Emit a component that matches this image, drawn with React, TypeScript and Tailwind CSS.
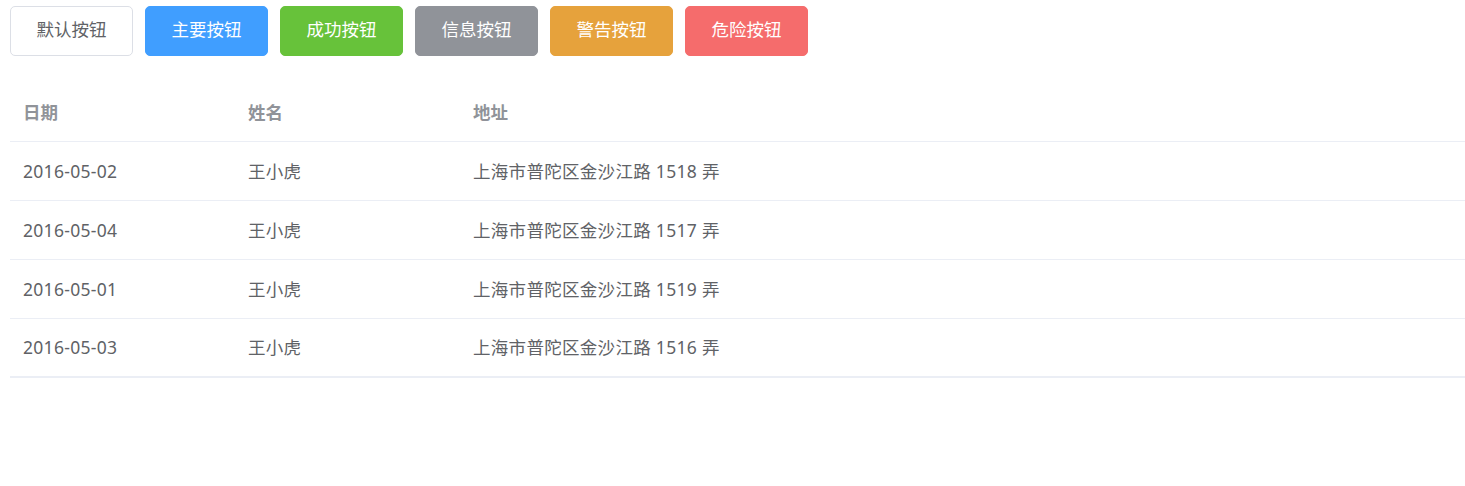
const buttons = [
  { label: '默认按钮', cls: 'bg-white border-[#dcdfe6] text-[#606266]' },
  { label: '主要按钮', cls: 'bg-[#409eff] border-[#409eff] text-white' },
  { label: '成功按钮', cls: 'bg-[#67c23a] border-[#67c23a] text-white' },
  { label: '信息按钮', cls: 'bg-[#909399] border-[#909399] text-white' },
  { label: '警告按钮', cls: 'bg-[#e6a23c] border-[#e6a23c] text-white' },
  { label: '危险按钮', cls: 'bg-[#f56c6c] border-[#f56c6c] text-white' },
];

const rows = [
  { date: '2016-05-02', name: '王小虎', address: '上海市普陀区金沙江路 1518 弄' },
  { date: '2016-05-04', name: '王小虎', address: '上海市普陀区金沙江路 1517 弄' },
  { date: '2016-05-01', name: '王小虎', address: '上海市普陀区金沙江路 1519 弄' },
  { date: '2016-05-03', name: '王小虎', address: '上海市普陀区金沙江路 1516 弄' },
];

export default function App() {
  return (
    <div className="min-h-[486px] bg-white pt-[6px] pl-[10px] font-['Noto_Sans','Noto_Sans_CJK_SC',sans-serif] text-[17.5px]">
      <div className="flex gap-[12px]">
        {buttons.map((b) => (
          <button
            key={b.label}
            className={`flex h-[50px] w-[123px] items-center justify-center rounded-[5px] border pb-[3px] ${b.cls}`}
          >
            {b.label}
          </button>
        ))}
      </div>

      <div className="mt-[27px]">
        <div className="flex h-[59px] items-center border-b border-[#ebeef5] pt-[1px] font-bold text-[#909399]">
          <div className="w-[225px] pl-[13px]">日期</div>
          <div className="w-[225px] pl-[13px]">姓名</div>
          <div className="flex-1 pl-[13px]">地址</div>
        </div>
        {rows.map((r, i) => (
          <div
            key={r.date}
            className={`flex h-[59px] items-center text-[#606266] tracking-[0.3px] ${
              i === rows.length - 1 ? 'border-b-2' : 'border-b'
            } border-[#ebeef5]`}
          >
            <div className="w-[225px] pl-[13px]">{r.date}</div>
            <div className="w-[225px] pl-[13px]">{r.name}</div>
            <div className="flex-1 pl-[13px]">{r.address}</div>
          </div>
        ))}
      </div>
    </div>
  );
}
